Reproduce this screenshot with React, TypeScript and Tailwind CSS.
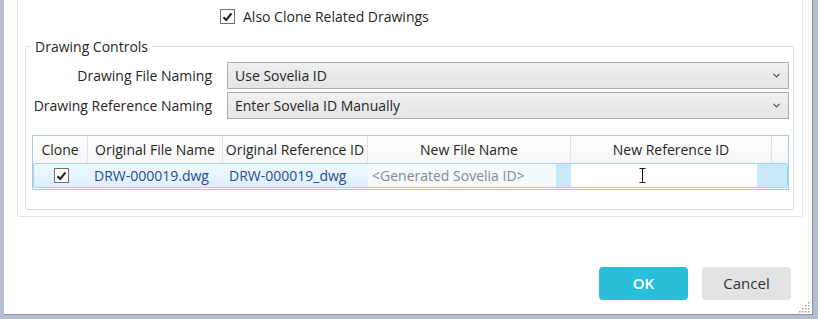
import { ChevronDown } from 'lucide-react';

function Check() {
  return (
    <span className="flex h-[15px] w-[15px] items-center justify-center border border-[#707070] bg-white">
      <svg width="11" height="10" viewBox="0 0 11 10">
        <path d="M1.5 5.2 L4.2 8 L9.5 1.5" fill="none" stroke="#222" strokeWidth="2" />
      </svg>
    </span>
  );
}

function Combo({ value }: { value: string }) {
  return (
    <div className="flex h-[27px] flex-1 items-center justify-between border border-[#acacac] bg-gradient-to-b from-[#f0f0f0] to-[#e5e5e5] pl-[7px] pr-[6px]">
      <span>{value}</span>
      <ChevronDown size={11} strokeWidth={2.2} className="text-[#444]" />
    </div>
  );
}

const cols = ['Clone', 'Original File Name', 'Original Reference ID', 'New File Name', 'New Reference ID'];
const widths = ['w-[55px]', 'w-[135px]', 'w-[145px]', 'w-[203px]', 'w-[201px]'];

export default function App() {
  return (
    <div className="h-[319px] w-[818px] bg-[#b2becf] pb-[4px] pl-[4px] pr-[5px] font-['Open_Sans',sans-serif] text-[13px] text-[#262626]">
      <div className="relative flex h-full flex-col border-b border-r border-[#8c939e] bg-white">
        {/* outer panel */}
        <div className="ml-[13px] h-[217px] w-[786px] rounded-b-[3px] border-x border-b border-[#dde4ea] px-[7px] pt-[6px]">
          <label className="ml-[195px] flex items-center gap-[8px]">
            <Check />
            <span className="text-[14px]">Also Clone Related Drawings</span>
          </label>

          <fieldset className="mt-[9px] h-[174px] w-[769px] rounded-[3px] border border-[#d5dde3] pt-[5px]">
            <legend className="ml-[5px] px-[4px] text-[14px]">Drawing Controls</legend>

            <div className="grid grid-cols-[201px_1fr] gap-y-[3px] pr-[4px] text-[14px]">
              <span className="self-center pr-[15px] text-right">Drawing File Naming</span>
              <Combo value="Use Sovelia ID" />
              <span className="self-center pr-[15px] text-right">Drawing Reference Naming</span>
              <Combo value="Enter Sovelia ID Manually" />
            </div>

            {/* data grid */}
            <div className="ml-[6px] mt-[16px] h-[55px] w-[757px] border border-[#a9c9e6] bg-white">
              <div className="flex h-[27px] bg-gradient-to-b from-white to-[#f6f6f6] text-[14px]">
                {cols.map((c, i) => (
                  <div key={c} className={`${widths[i]} flex items-center justify-center border-r border-[#e3e3e3]`}>
                    {c}
                  </div>
                ))}
                <div className="flex-1" />
              </div>
              <div className="flex h-[25px] items-center rounded-[2px] border border-[#9fd5f5] bg-gradient-to-b from-[#eef8fe] to-[#dcf0fc] text-[14px]">
                <div className="flex w-[54px] justify-center pl-[1px]">
                  <Check />
                </div>
                <div className="w-[135px] pl-[6px] text-[#2c4a92]">DRW-000019.dwg</div>
                <div className="w-[145px] pl-[6px] text-[#2c4a92]">DRW-000019_dwg</div>
                <div className="flex h-full w-[203px] items-center">
                  <span className="flex h-full w-[188px] items-center bg-[#f2fafe] pl-[4px] text-[#8a8a8a]">&lt;Generated Sovelia ID&gt;</span>
                  <span className="h-full flex-1 bg-[#cbe8fa]" />
                </div>
                <div className="flex h-full w-[201px] items-center">
                  <span className="flex h-full w-[186px] items-center justify-center bg-white pr-[44px]">
                    <svg width="7" height="15" viewBox="0 0 7 15">
                      <path d="M0.5 0.5 H6.5 M3.5 0.5 V14.5 M0.5 14.5 H6.5" stroke="#111" strokeWidth="1" fill="none" />
                    </svg>
                  </span>
                  <span className="h-full flex-1 bg-[#cbe8fa]" />
                </div>
                <div className="h-full flex-1 bg-[#cbe8fa]" />
              </div>
            </div>
          </fieldset>
        </div>

        {/* buttons */}
        <div className="mt-auto flex justify-end gap-[14px] pb-[14px] pr-[21px] text-[15px]">
          <button className="h-[33px] w-[89px] rounded-[4px] bg-[#29bfda] font-semibold text-white">OK</button>
          <button className="h-[33px] w-[89px] rounded-[4px] bg-[#e3e3e3] text-[#333]">Cancel</button>
        </div>

        {/* resize grip */}
        <svg className="absolute bottom-[1px] right-[1px]" width="12" height="12" viewBox="0 0 12 12">
          {[
            [10, 2], [10, 5], [10, 8], [10, 11], [7, 5], [7, 8], [7, 11], [4, 8], [4, 11], [1, 11],
          ].map(([x, y]) => (
            <rect key={`${x}-${y}`} x={x - 1} y={y - 1} width="1.5" height="1.5" fill="#9aa4b0" />
          ))}
        </svg>
      </div>
    </div>
  );
}
